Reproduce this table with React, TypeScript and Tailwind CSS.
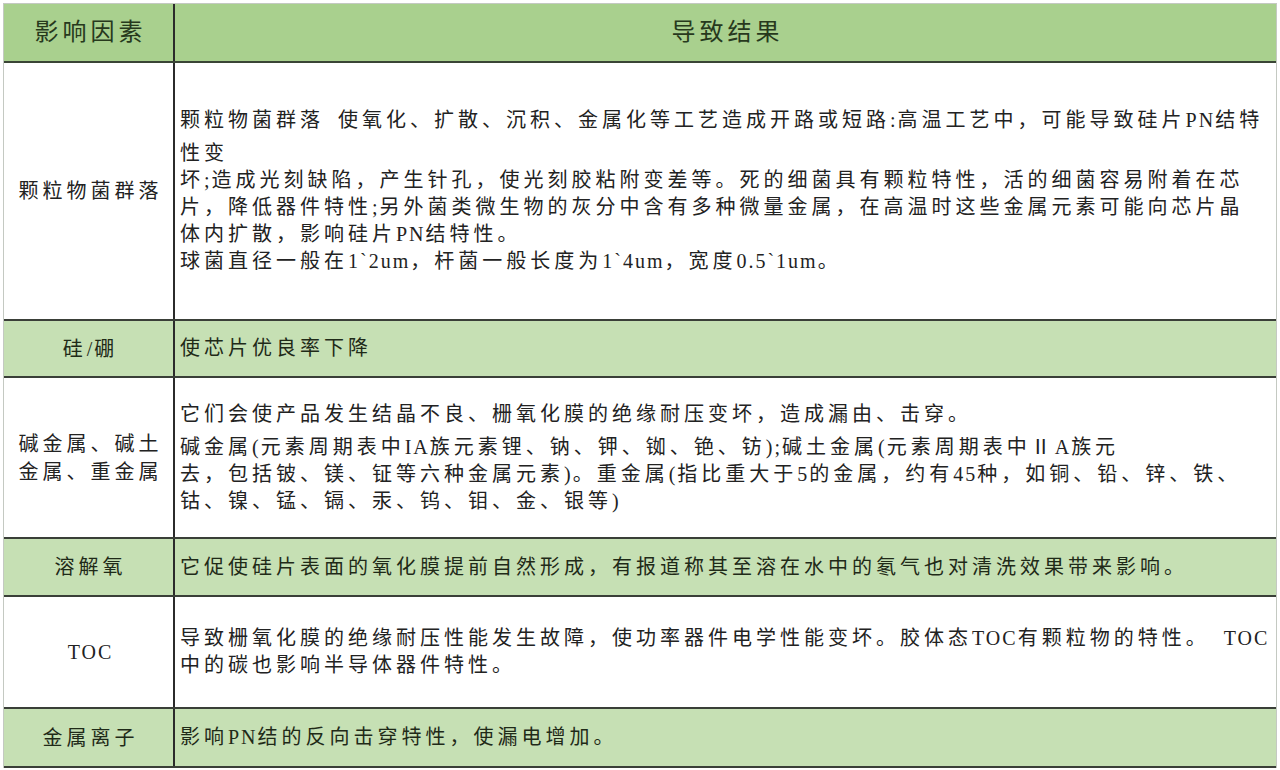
const font = "font-['Liberation_Serif','Noto_Sans_CJK_SC',serif]";

// ascii runs get tight spacing, cjk keeps the wide tracking
const Txt = ({ text }: { text: string }) => {
  const parts = text.split(/([\x20-\x7e]+)/);
  return (
    <>
      {parts.map((part, i) =>
        /^[\x20-\x7e]+$/.test(part) ? (
          <span key={i} className="tracking-[2px]">
            {part}
          </span>
        ) : (
          <span key={i}>{part}</span>
        )
      )}
    </>
  );
};

interface RowProps {
  label: string[];
  lines: string[];
  height: string;
  green?: boolean;
  gapFirst?: boolean;
}

const Row = ({ label, lines, height, green, gapFirst }: RowProps) => {
  return (
    <div
      className={`flex border-b-2 border-[#3a3f38] ${height} ${
        green ? "bg-[#c6e0b4] text-[#1f2a18]" : "bg-white text-[#222]"
      }`}
    >
      <div className="flex w-[171px] shrink-0 items-center justify-center border-r-2 border-[#2b2b2b] pl-[4px] text-center leading-[28px]">
        <div>
          {label.map((l, i) => (
            <p key={i}>
              <Txt text={l} />
            </p>
          ))}
        </div>
      </div>
      <div className="flex flex-1 items-center pl-[5px]">
        <div>
          {lines.map((line, i) => (
            <p
              key={i}
              className={`whitespace-nowrap ${
                gapFirst && i === 0 ? "mb-[6px]" : ""
              }`}
            >
              <Txt text={line} />
            </p>
          ))}
        </div>
      </div>
    </div>
  );
};

export default function App() {
  return (
    <div
      className={`h-[770px] w-[1280px] overflow-hidden bg-white px-[3px] pt-[3px] ${font} text-[20px] leading-[27px] tracking-[4px]`}
    >
      <div className="border-t border-l border-r border-[#c4c9c2]">
        <div className="flex h-[59px] border-b-2 border-[#3a4536] bg-[#a9d08e] text-[24px] tracking-[4px] text-[#27391d]">
          <div className="flex w-[171px] shrink-0 items-center justify-center border-r-2 border-[#2b2b2b] pl-[4px]">
            影响因素
          </div>
          <div className="flex flex-1 items-center justify-center pl-[4px]">
            导致结果
          </div>
        </div>

        <Row
          height="h-[258px]"
          gapFirst
          label={["颗粒物菌群落"]}
          lines={[
            "颗粒物菌群落\u2002使氧化、扩散、沉积、金属化等工艺造成开路或短路:高温工艺中，可能导致硅片PN结特",
            "性变",
            "坏;造成光刻缺陷，产生针孔，使光刻胶粘附变差等。死的细菌具有颗粒特性，活的细菌容易附着在芯",
            "片，降低器件特性;另外菌类微生物的灰分中含有多种微量金属，在高温时这些金属元素可能向芯片晶",
            "体内扩散，影响硅片PN结特性。",
            "球菌直径一般在1`2um，杆菌一般长度为1`4um，宽度0.5`1um。",
          ]}
        />

        <Row
          height="h-[57px]"
          green
          label={["硅/硼"]}
          lines={["使芯片优良率下降"]}
        />

        <Row
          height="h-[161px]"
          gapFirst
          label={["碱金属、碱土", "金属、重金属"]}
          lines={[
            "它们会使产品发生结晶不良、栅氧化膜的绝缘耐压变坏，造成漏由、击穿。",
            "碱金属(元素周期表中IA族元素锂、钠、钾、铷、铯、钫);碱土金属(元素周期表中ⅡA族元",
            "去，包括铍、镁、钲等六种金属元素)。重金属(指比重大于5的金属，约有45种，如铜、铅、锌、铁、",
            "钴、镍、锰、镉、汞、钨、钼、金、银等)",
          ]}
        />

        <Row
          height="h-[58px]"
          green
          label={["溶解氧"]}
          lines={[
            "它促使硅片表面的氧化膜提前自然形成，有报道称其至溶在水中的氡气也对清洗效果带来影响。",
          ]}
        />

        <Row
          height="h-[112px]"
          label={["TOC"]}
          lines={[
            "导致栅氧化膜的绝缘耐压性能发生故障，使功率器件电学性能变坏。胶体态TOC有颗粒物的特性。\u2002TOC",
            "中的碳也影响半导体器件特性。",
          ]}
        />

        <Row
          height="h-[59px]"
          green
          label={["金属离子"]}
          lines={["影响PN结的反向击穿特性，使漏电增加。"]}
        />
      </div>
    </div>
  );
}
